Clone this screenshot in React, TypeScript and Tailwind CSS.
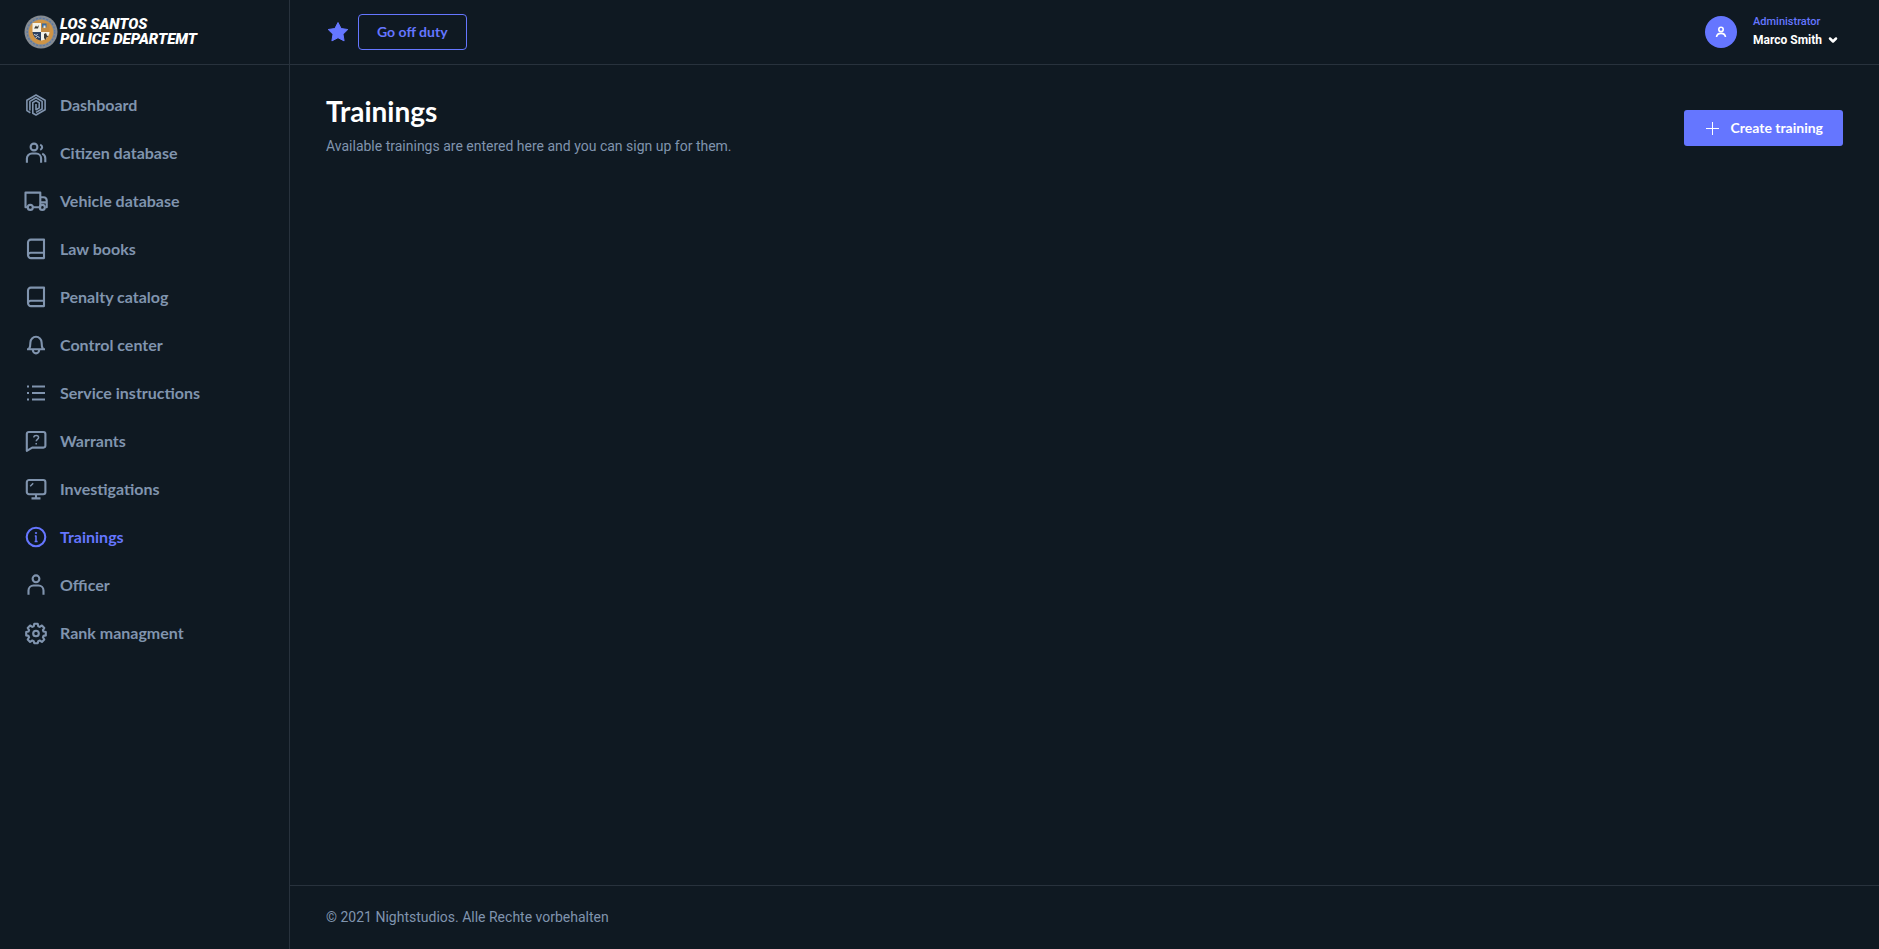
import React, { useState } from 'react';
import { ChevronDown } from 'lucide-react';

const ICONS = {
  dashboard: (
    <>
      <path d="M6.4 19.8 2.9 17.6V7.2L12 2l9.1 5.2v9.6L12 22l-3.2-1.800V9.600L12 7.700l3.200 1.900v5.300L12 16.700V11" />
      <path d="M5.900 17.400V8.400L12 4.800l6.100 3.600v7.600L12 19.400" />
    </>
  ),
  users: (
    <>
      <circle cx="10" cy="6" r="3.400" />
      <path d="M2.900 21.800v-4.300a5 5 0 0 1 5-5h4.200a5 5 0 0 1 5 5v4.300" />
      <path d="M16.200 3.600c2.600 1.200 2.600 3.800 0 5.200M18.200 12.600c1.900.8 3.100 2.600 3.100 4.600v4" />
    </>
  ),
  truck: (
    <>
      <path d="M3.600 18.200H1.500V3.600h14.800v14.600H9M16.300 8.200h3.100a3.400 3.400 0 0 1 3.300 3.400v6.600h-1.300M16.300 13.400h6.200" />
      <circle cx="6.300" cy="18.400" r="2.500" />
      <circle cx="18.300" cy="18.400" r="2.500" />
    </>
  ),
  book: (
    <>
      <path d="M20 21.100H7a3 3 0 0 1-3-3V5.400a2.800 2.800 0 0 1 2.800-2.800H20z" />
      <path d="M4 18.300a2.600 2.600 0 0 1 2.800-2.500H20" />
    </>
  ),
  bell: (
    <>
      <path d="M3 16.200h18M5 16c1.200-1.600 1.400-3.400 1.400-6.600a5.600 5.600 0 0 1 11.200 0c0 3.200.2 5 1.400 6.600" />
      <path d="M8.800 16.800a3.200 3.600 0 0 0 6.400 0" />
    </>
  ),
  list: (
    <>
      <path d="M8 5.500h13M8 12h13M8 18.500h13" />
      <path d="M3 5.500h2M3 12h2M3 18.500h2" />
    </>
  ),
  question: (
    <>
      <path d="M2.800 21.800V5a2 2 0 0 1 2-2h14.600a2 2 0 0 1 2 2v11.600a2 2 0 0 1-2 2H8.200z" />
      <path d="M9.800 8.600c0-3 4.800-2.800 4.800 0 0 1.800-2.400 1.800-2.400 3.600M12.200 14v1.600" strokeWidth="1.500" />
    </>
  ),
  monitor: (
    <>
      <rect x="2.800" y="3" width="18.600" height="14.200" rx="2.200" />
      <path d="M12 17.200v4M7.500 21.400h9" />
      <path d="M6.200 9.200l3-3" strokeWidth="1.500" />
    </>
  ),
  info: (
    <>
      <circle cx="12" cy="12" r="9.300" />
      <path d="M10.800 11H12v5.200M10.600 16.400h3" strokeWidth="1.500" />
      <path d="M12 7.200v1.600" />
    </>
  ),
  user: (
    <>
      <circle cx="12" cy="5.800" r="3.400" />
      <path d="M4.500 21.800v-4.300a5 5 0 0 1 5-5h5a5 5 0 0 1 5 5v4.300" />
    </>
  ),
  gear: (
    <>
      <path d="M10.300 2.800h3.400l.6 2.500 1.400.6 2.200-1.400 2.400 2.400-1.400 2.200.6 1.400 2.300.5v3.400l-2.300.5-.6 1.400 1.400 2.200-2.400 2.400-2.200-1.400-1.400.6-.6 2.200h-3.400l-.6-2.200-1.400-.6-2.200 1.400-2.400-2.400 1.400-2.200-.6-1.400-2.300-.5v-3.400l2.300-.5.6-1.400-1.400-2.200 2.400-2.400 2.200 1.400 1.400-.6z" />
      <circle cx="12" cy="12.500" r="2.800" />
    </>
  ),
};

type IconName = keyof typeof ICONS;

const NAV_ITEMS: { label: string; icon: IconName }[] = [
  { label: 'Dashboard', icon: 'dashboard' },
  { label: 'Citizen database', icon: 'users' },
  { label: 'Vehicle database', icon: 'truck' },
  { label: 'Law books', icon: 'book' },
  { label: 'Penalty catalog', icon: 'book' },
  { label: 'Control center', icon: 'bell' },
  { label: 'Service instructions', icon: 'list' },
  { label: 'Warrants', icon: 'question' },
  { label: 'Investigations', icon: 'monitor' },
  { label: 'Trainings', icon: 'info' },
  { label: 'Officer', icon: 'user' },
  { label: 'Rank managment', icon: 'gear' },
];

function Icon({ name, className }: { name: IconName; className: string }) {
  return (
    <svg
      viewBox="0 0 24 24"
      fill="none"
      stroke="currentColor"
      strokeWidth={name === 'dashboard' ? 1.6 : 2.1}
      strokeLinejoin="round"
      className={className}
      aria-hidden="true"
    >
      {ICONS[name]}
    </svg>
  );
}

function Seal() {
  return (
    <svg viewBox="0 0 34 34" className="size-[34px] shrink-0" aria-hidden="true">
      <circle cx="17" cy="17" r="16.500" fill="#858b92" />
      <circle cx="17" cy="17" r="13.800" fill="none" stroke="#5677a8" strokeWidth="1.200" strokeDasharray="2 1.500" />
      <circle cx="17" cy="17" r="12.300" fill="#cf9445" />
      <path d="M8.500 8h8.500v9H8.500z" fill="#f2f1e8" />
      <path d="M17 8h8.500v9H17z" fill="#c28a42" />
      <path d="M8.500 17H17v8.500c-4-.5-7.500-3-8.500-8.500z" fill="#2c4161" />
      <path d="M17 17h8.500c-.5 5-4 8-8.500 8.500z" fill="#f2f1e8" />
      <path d="M18 8.500h4.500v4H18z" fill="#3a6da3" />
      <path d="M19.500 10.500h2v2.500h-2z" fill="#e9e6d8" />
      <path d="M10 13.500l2-3 1 1.500 2-2-1 3.500zM20 19l2-1 1 2.500 1.500 1-2 1-1 2.500-1.500-2z" fill="#3b3a35" />
      <path d="M10 19.500l2.500 1 1-1.500M11.500 23l2-1.500 2 1" fill="none" stroke="#d9dde0" strokeWidth="1" />
    </svg>
  );
}

export default function App() {
  const [active, setActive] = useState('Trainings');

  return (
    <div className="flex min-h-screen bg-[#0f1922] font-['Roboto',sans-serif] text-sm text-[#8094ae]">
      <aside className="w-[290px] shrink-0 border-r border-[#28323d]">
        <a href="#" className="flex h-[65px] items-center gap-[2px] border-b border-[#28323d] pl-6">
          <Seal />
          <span className="text-[15px] leading-[15px] font-black whitespace-nowrap text-white italic">
            <span className="block">LOS SANTOS</span>
            <span className="block">POLICE DEPARTEMT</span>
          </span>
        </a>
        <nav className="pt-4">
          {NAV_ITEMS.map((item) => (
            <a
              key={item.label}
              href="#"
              onClick={() => setActive(item.label)}
              className={`flex h-12 items-center gap-3 pl-6 font-['Lato',sans-serif] text-base font-bold ${
                active === item.label ? 'text-[#6576ff]' : 'text-[#8094ae]'
              }`}
            >
              <Icon name={item.icon} className="size-6" />
              {item.label}
            </a>
          ))}
        </nav>
      </aside>

      <div className="flex flex-1 flex-col">
        <header className="flex h-[65px] items-center justify-between border-b border-[#28323d] px-9">
          <div className="flex items-center gap-2">
            <svg viewBox="0 0 24 24" className="size-6 text-[#6576ff]" fill="currentColor" stroke="currentColor" strokeLinejoin="round" aria-hidden="true">
              <path d="M12 2.500l3.100 6 6.700 1-4.800 4.700 1.100 6.700-6.100-3.200-6.100 3.200 1.100-6.700L2.200 9.500l6.700-1z" />
            </svg>
            <button
              type="button"
              className="h-9 rounded border border-[#6576ff] px-[18px] font-['Lato',sans-serif] text-sm font-bold text-[#6576ff]"
            >
              Go off duty
            </button>
          </div>
          <button type="button" className="flex items-center gap-4 pr-1 text-left">
            <span className="flex size-8 items-center justify-center rounded-full bg-[#6576ff] text-white">
              <svg viewBox="0 0 12 12" fill="none" stroke="currentColor" strokeWidth="1.600" className="size-3" aria-hidden="true">
                <circle cx="6" cy="3.400" r="2.200" />
                <path d="M1.500 11c.3-2.200 1.600-3.600 4.500-3.600s4.200 1.400 4.500 3.600" />
              </svg>
            </span>
            <span>
              <span className="block text-[11px] leading-4 font-medium text-[#6576ff]">Administrator</span>
              <span className="flex items-center gap-[5px] text-xs leading-5 font-bold text-white">
                Marco Smith
                <ChevronDown className="size-3" strokeWidth={5} />
              </span>
            </span>
          </button>
        </header>

        <main className="flex-1 px-9 pt-7">
          <div className="flex items-center justify-between">
            <div>
              <h1 className="font-['Lato',sans-serif] text-[28px] leading-9 font-bold text-white">Trainings</h1>
              <p className="mt-[5px] pb-1 leading-6">Available trainings are entered here and you can sign up for them.</p>
            </div>
            <button
              type="button"
              className="flex h-9 items-center gap-[10px] rounded-[3px] bg-[#6576ff] px-5 font-['Lato',sans-serif] text-sm font-bold text-white"
            >
              <svg viewBox="0 0 16 16" stroke="currentColor" className="size-4" aria-hidden="true">
                <path d="M8.500 2v13M2 8.500h13" />
              </svg>
              Create training
            </button>
          </div>
        </main>

        <footer className="flex h-16 items-center border-t border-[#28323d] px-9 pb-[2px]">
          © 2021 Nightstudios. Alle Rechte vorbehalten
        </footer>
      </div>
    </div>
  );
}
